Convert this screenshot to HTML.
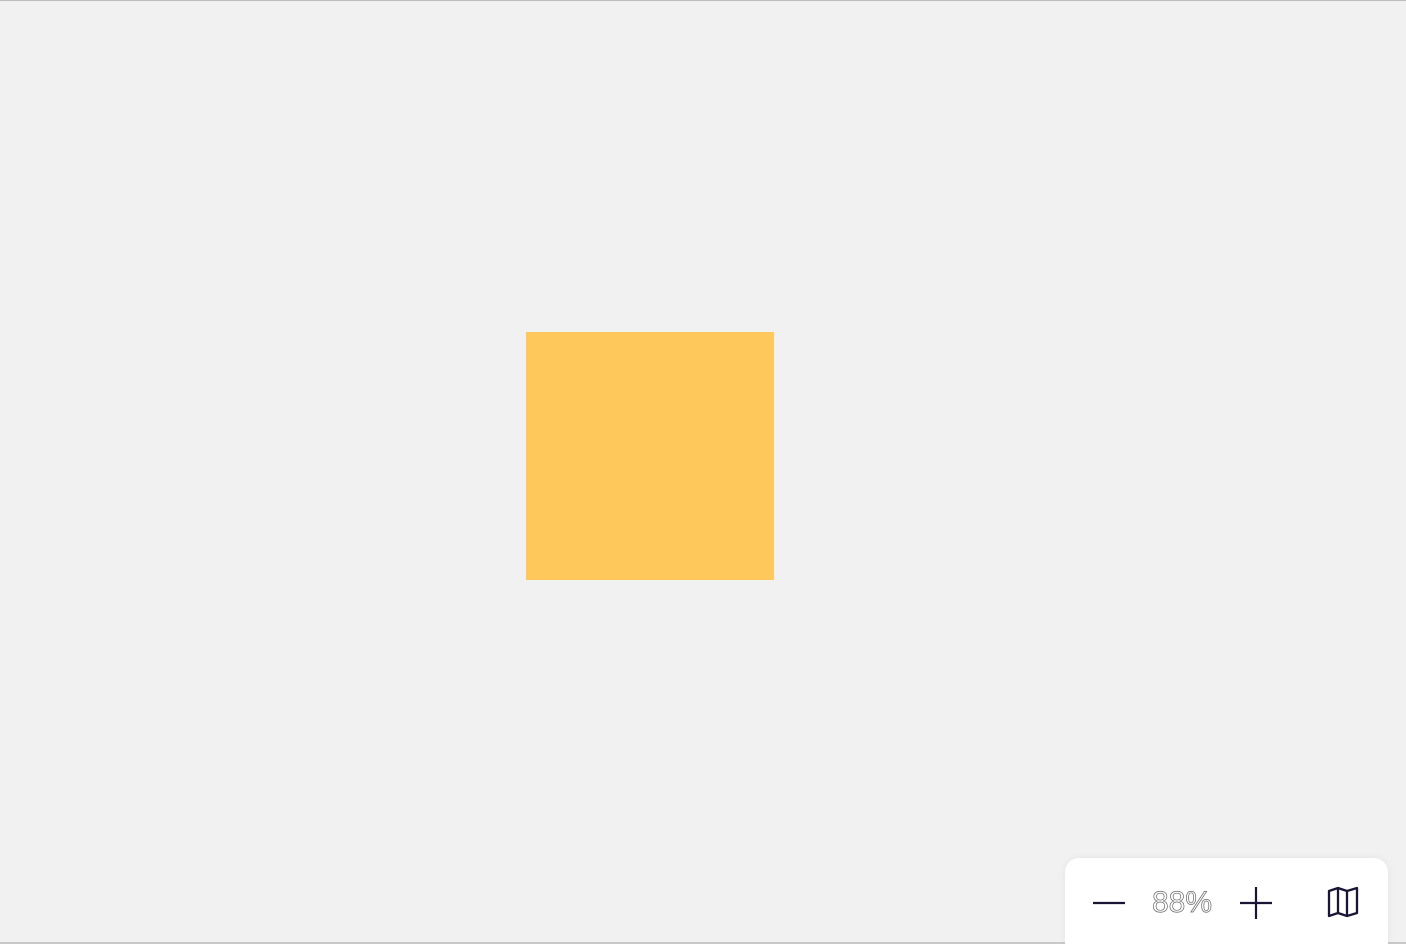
<!DOCTYPE html>
<html><head><style>
html,body{margin:0;width:1406px;height:944px;overflow:hidden;background:#f1f1f1;font-family:"Liberation Sans",sans-serif;position:relative}
.top{position:absolute;left:0;top:0;width:1406px;height:1px;background:#bdbdbd}
.bot{position:absolute;left:0;top:942px;width:1406px;height:2px;background:#c8c8c8}
.sq{position:absolute;left:526px;top:332px;width:248px;height:248px;background:#fec95a}
.panel{position:absolute;left:1065px;top:858px;width:323px;height:86px;background:#fff;border-radius:14px 14px 0 0;box-shadow:0 0 8px rgba(0,0,0,.06)}
.pct{position:absolute;left:1152px;top:886px;font-size:30px;color:#fff;-webkit-text-stroke:0.7px #666}
svg{position:absolute}
</style></head><body>
<div class="top"></div>
<div class="sq"></div>
<div class="bot"></div>
<div class="panel"></div>
<svg style="left:1090px;top:890px" width="40" height="26"><line x1="3" y1="13" x2="35" y2="13" stroke="#1b1535" stroke-width="2.2"/></svg>
<div class="pct">88%</div>
<svg style="left:1236px;top:883px" width="40" height="40"><path d="M4 20H36M20 4V36" stroke="#1b1535" stroke-width="2.2" fill="none"/></svg>
<svg style="left:1324px;top:885px" width="40" height="36"><path d="M5 6L14 3L23 6L33 3V28L23 31L14 28L5 31Z M14 3V28 M23 6V31" stroke="#1b1535" stroke-width="2.3" fill="none" stroke-linejoin="round"/></svg>
</body></html>
